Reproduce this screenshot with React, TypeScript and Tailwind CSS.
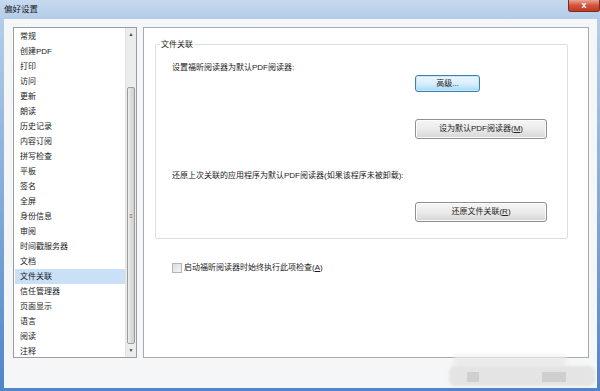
import React from 'react';

const items = [
  '常规', '创建PDF', '打印', '访问', '更新', '朗读', '历史记录', '内容订阅', '拼写检查', '平板', '签名',
  '全屏', '身份信息', '审阅', '时间戳服务器', '文档', '文件关联', '信任管理器', '页面显示', '语言', '阅读', '注释',
];

const font = { fontFamily: '"Liberation Sans", "Noto Sans CJK SC", sans-serif' };

function Btn({ label, hot, w, h }: { label: React.ReactNode; hot?: boolean; w: string; h: string }) {
  return (
    <div
      className={`${w} ${h} flex items-center justify-center rounded-[3px] border text-[8px] text-[#222] ${
        hot
          ? 'border-[#3c7fb1] bg-gradient-to-b from-[#eaf6fd] via-[#d9f0fc] to-[#a7d9f5] shadow-[inset_0_0_0_1px_#c8e6f8]'
          : 'border-[#8e8f8f] bg-gradient-to-b from-[#f6f6f6] via-[#ebebeb] to-[#d6d6d6] shadow-[inset_0_0_0_1px_#fcfcfc]'
      }`}
    >
      {label}
    </div>
  );
}

export default function App() {
  return (
    <div className="w-[600px] h-[391px] flex flex-col bg-gradient-to-b from-[#b9d1ea] to-[#4f85c9] overflow-hidden" style={font}>
      {/* title bar */}
      <div className="h-[19px] flex items-start justify-between bg-gradient-to-b from-[#c6daef] to-[#b3cce8]">
        <span className="pl-[4px] pt-[4px] text-[8.5px] leading-[10px] text-[#1b1b1b]">偏好设置</span>
        <div className="w-[32px] h-[12px] rounded-b-[3px] border border-t-0 border-[#7a2a22] bg-gradient-to-b from-[#e8a493] via-[#d2533b] to-[#c0391f] flex items-center justify-center text-white text-[9px] font-bold leading-none">
          x
        </div>
      </div>

      {/* body */}
      <div className="flex-1 ml-[4px] mr-[3px] mb-[3px] bg-[#f5f6f7] flex flex-col">
        <div className="flex pt-[8px] pl-[9px]">
          {/* category list */}
          <div className="w-[124px] h-[331px] border border-[#9c9c9c] bg-white flex">
            <div className="flex-1 pt-[1px]">
              {items.map((t) => (
                <div
                  key={t}
                  className={`h-[15px] ml-[1px] pl-[5px] flex items-center text-[8px] text-[#1a1a1a] ${
                    t === '文件关联' ? 'bg-[#c9e0f7]' : ''
                  }`}
                >
                  {t}
                </div>
              ))}
            </div>
            {/* scrollbar */}
            <div className="w-[11px] bg-[#ececec] border-l border-[#e2e2e2] flex flex-col items-center">
              <div className="h-[14px] flex items-center justify-center text-[5px] text-[#444]">▲</div>
              <div className="flex-1 w-full pt-[45px] pb-[1px] px-[1px] flex flex-col">
                <div className="flex-1 rounded-[2px] border border-[#9b9b9b] bg-gradient-to-r from-[#eeeeee] via-[#dcdcdc] to-[#cfcfcf] flex items-center justify-center">
                  <span className="text-[6px] leading-none text-[#666]">≡</span>
                </div>
              </div>
              <div className="h-[12px] flex items-center justify-center text-[5px] text-[#444]">▼</div>
            </div>
          </div>

          {/* right panel */}
          <div className="ml-[6px] w-[446px] h-[331px] border border-[#a9a9a9] bg-white pl-[11px] pt-[16px]">
            <div className="relative w-[413px] h-[195px] border border-[#dadfe3] rounded-[2px] pl-[16px] pt-[18px]">
              <span className="absolute -top-[6px] left-[4px] bg-white px-[1px] text-[8px] leading-[11px] text-[#1a1a1a]">文件关联</span>
              <div className="text-[8px] leading-[10px] text-[#1a1a1a]">设置福昕阅读器为默认PDF阅读器:</div>
              <div className="ml-[243px] mt-[2px]">
                <Btn label="高级..." hot w="w-[65px]" h="h-[17px]" />
              </div>
              <div className="ml-[243px] mt-[27px]">
                <Btn label={<span>设为默认PDF阅读器(<u>M</u>)</span>} w="w-[132px]" h="h-[20px]" />
              </div>
              <div className="mt-[32px] text-[8px] leading-[10px] text-[#1a1a1a]">
                还原上次关联的应用程序为默认PDF阅读器(如果该程序未被卸载):
              </div>
              <div className="ml-[243px] mt-[21px]">
                <Btn label={<span>还原文件关联(<u>R</u>)</span>} w="w-[132px]" h="h-[20px]" />
              </div>
            </div>
            <div className="flex items-center mt-[24px] ml-[17px]">
              <div className="w-[10px] h-[10px] border border-[#b5b5b5] bg-gradient-to-br from-[#dcdcdc] to-[#f4f4f4]" />
              <span className="ml-[2px] text-[8px] leading-[10px] text-[#1a1a1a]">
                启动福昕阅读器时始终执行此项检查(<u>A</u>)
              </span>
            </div>
          </div>
        </div>

        {/* bottom buttons (obscured) */}
        <div className="flex-1 flex justify-end items-end pr-[2px] pb-[2px]">
          <div className="relative w-[146px] h-[20px]">
            <div className="absolute -top-[10px] left-[5px] w-[112px] h-[12px] bg-[#ebebeb] blur-[2px]" />
            <div className="absolute inset-0 rounded-[6px] bg-[#e4e4e4] blur-[1px]" />
            <div className="absolute top-[6px] left-[18px] w-[12px] h-[10px] bg-[#cfcfcf]" />
            <div className="absolute top-[6px] left-[93px] w-[24px] h-[10px] bg-[#cfcfcf]" />
          </div>
        </div>
      </div>
    </div>
  );
}
